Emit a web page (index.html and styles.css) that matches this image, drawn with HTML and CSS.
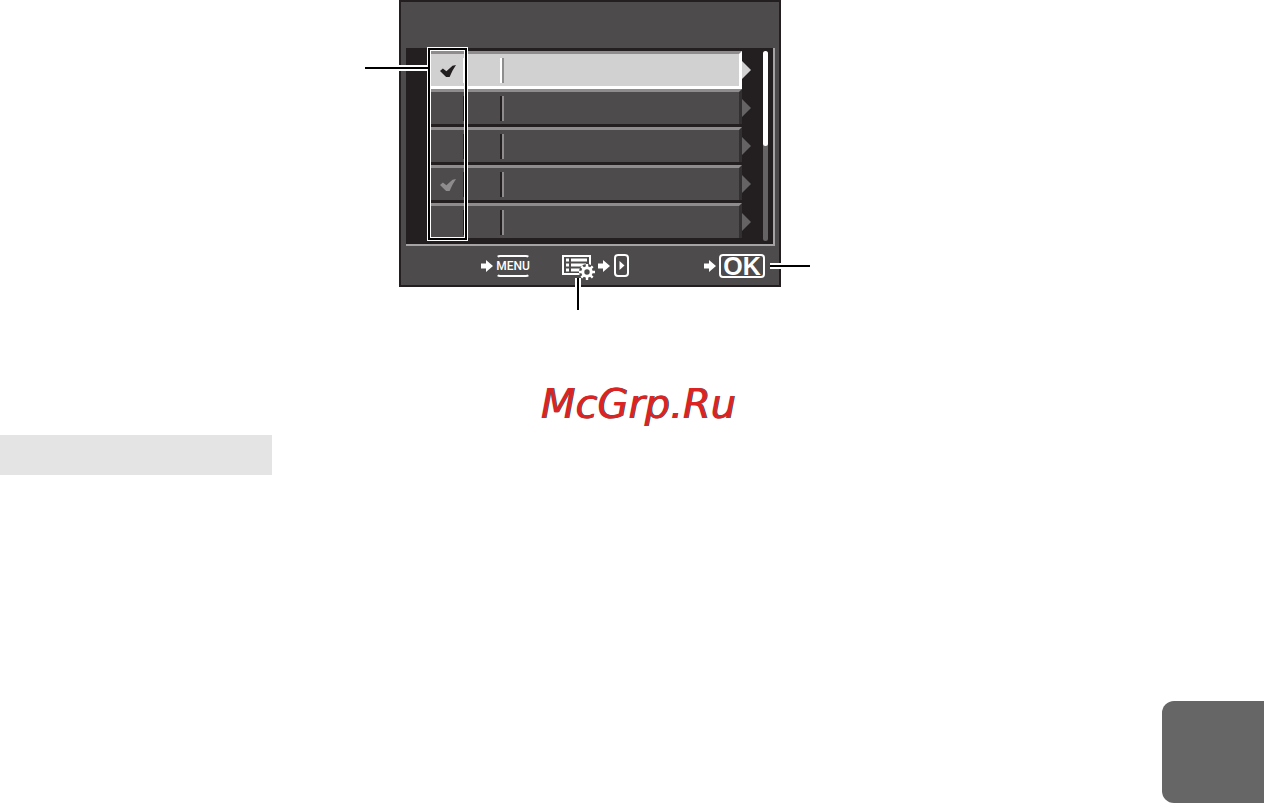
FILE: index.html
```html
<!DOCTYPE html>
<html lang="en">
<head>
    <meta charset="UTF-8">
    <meta name="viewport" content="width=device-width, initial-scale=1.0">
    <title>McGrp.Ru</title>
    <link rel="stylesheet" href="styles.css">
</head>
<body>

<!-- Shared icon shapes -->
<svg class="defs" aria-hidden="true">
    <symbol id="arrow" viewBox="0 0 12 12">
        <path d="M0 3.500h5V0l7 6-7 6V8.500H0z" fill="#fff"/>
    </symbol>
</svg>

<main class="page">
    <div class="diagram">
        <section class="camera">
            <div class="screen">
                <ul class="rows">
                    <li class="row selected">
                        <input type="checkbox" class="tick" aria-label="Item 1" checked>
                        <span class="divider"></span>
                        <button class="next" aria-label="Open item 1"></button>
                    </li>
                    <li class="row">
                        <input type="checkbox" class="tick" aria-label="Item 2">
                        <span class="divider"></span>
                        <button class="next" aria-label="Open item 2"></button>
                    </li>
                    <li class="row">
                        <input type="checkbox" class="tick" aria-label="Item 3">
                        <span class="divider"></span>
                        <button class="next" aria-label="Open item 3"></button>
                    </li>
                    <li class="row">
                        <input type="checkbox" class="tick" aria-label="Item 4" checked>
                        <span class="divider"></span>
                        <button class="next" aria-label="Open item 4"></button>
                    </li>
                    <li class="row">
                        <input type="checkbox" class="tick" aria-label="Item 5">
                        <span class="divider"></span>
                        <button class="next" aria-label="Open item 5"></button>
                    </li>
                </ul>
                <div class="scrollbar"><div class="thumb"></div></div>
            </div>

            <div class="controls">
                <div class="control">
                    <svg class="arrow"><use href="#arrow"/></svg>
                    <button class="menu-button">MENU</button>
                </div>
                <div class="control">
                    <svg class="list-icon" width="33" height="28" viewBox="0 0 33 28">
                        <path d="M1 2h27v18H1z" fill="none" stroke="#fff" stroke-width="2"/>
                        <path d="M4 6h3M4 11h3M4 16h3" stroke="#fff" stroke-width="3"/>
                        <path d="M9 6h16M9 11h15M9 16h10" stroke="#fff" stroke-width="3"/>
                        <circle cx="25" cy="18" r="8" fill="#4d4b4c"/>
                        <path d="M25 10v16M17 18h16M19.300 12.300l11.400 11.400M30.700 12.300L19.300 23.700" stroke="#fff" stroke-width="2.400"/>
                        <circle cx="25" cy="18" r="4.200" fill="#4d4b4c" stroke="#fff" stroke-width="3"/>
                    </svg>
                    <svg class="arrow"><use href="#arrow"/></svg>
                    <svg class="right-key" width="16" height="23" viewBox="0 0 16 23">
                        <rect x="1" y="1" width="13" height="21" rx="3" fill="none" stroke="#fff" stroke-width="2"/>
                        <path d="M5.500 7l5 4.500-5 4.500z" fill="#fff"/>
                    </svg>
                </div>
                <div class="control last">
                    <svg class="arrow"><use href="#arrow"/></svg>
                    <button class="ok-button">OK</button>
                </div>
            </div>
        </section>

        <!-- Callouts drawn over the camera screen -->
        <div class="tick-frame"></div>
        <svg class="callouts" width="445" height="310" viewBox="365 0 445 310">
            <path d="M399 68h29M770 266h11M578 278v9" stroke="#fff" stroke-width="6"/>
            <path d="M365 68h64M770 266h40M578 278v32" stroke="#000" stroke-width="2"/>
        </svg>
    </div>

    <p class="watermark">McGrp.Ru</p>
    <div class="heading-bar"></div>
    <div class="page-tab"></div>
</main>

</body>
</html>
```
FILE: styles.css
```css
* {
    box-sizing: border-box;
}

body {
    margin: 0;
    background: #fff;
    font-family: "Liberation Sans", Arial, sans-serif;
}

button {
    padding: 0;
    border: 0;
    background: none;
    color: #fff;
}

.defs {
    display: none;
}

.page {
    display: flex;
    flex-direction: column;
    min-height: 100vh;
}

.diagram {
    position: relative;
    width: 382px;
    margin-left: 399px;
}

.camera {
    padding: 46px 4px 0 5px;
    background: #4d4b4c;
    border: 2px solid #231f20;
}

.screen {
    display: flex;
    padding: 3px 5px 3px 24px;
    background: #231f20;
    border: solid #a5a3a4;
    border-width: 0 2px 2px 0;
}

/* Menu rows */
.rows {
    width: 312px;
    margin: 0;
    padding: 0;
    list-style: none;
}

.row {
    display: flex;
    align-items: center;
    height: 35px;
    margin-bottom: 3px;
    background: #4d4b4c;
    border: solid #333031;
    border-width: 3px 3px 0 1px;
    border-top-color: #8f8c8e;
    border-left-color: #8f8c8e;
}

.row.selected {
    height: 38px;
    margin-bottom: 0;
    background: #d1d1d1;
    border-color: #fff;
    border-top-color: #8f8c8e;
    border-left-color: #8f8c8e;
    border-bottom-width: 3px;
}

.tick {
    display: grid;
    place-items: center;
    width: 34px;
    height: 25px;
    margin: 0;
    appearance: none;
    border-right: 2px solid #231f20;
}

.tick:checked::before {
    content: "";
    width: 16px;
    height: 12px;
    margin: 2px 0 0 2px;
    background: #8f8c8e;
    clip-path: polygon(0 50%, 18% 30%, 40% 52%, 78% 6%, 100% 0, 78% 48%, 60% 100%, 38% 100%);
}

.selected .tick {
    border-color: #fff;
}

.selected .tick:checked::before {
    background: #231f20;
}

.divider {
    width: 4px;
    height: 25px;
    margin-left: 35px;
    border-left: 2px solid #231f20;
    background: #8f8c8e;
}

.selected .divider {
    border-color: #fff;
}

.next {
    width: 9px;
    height: 18px;
    margin: 0 -12px 0 auto;
    background: #656364;
    clip-path: polygon(0 0, 100% 50%, 0 100%);
}

.selected .next {
    background: #d1d1d1;
}

.scrollbar {
    width: 5px;
    margin-left: auto;
    background: #656364;
    border-radius: 3px;
}

.thumb {
    height: 50%;
    background: #fff;
    border-radius: 3px;
}

/* Key hints under the screen */
.controls {
    display: flex;
    gap: 32px;
    height: 39px;
    padding: 0 10px 0 75px;
}

.control {
    display: flex;
    align-items: center;
    gap: 3px;
}

.control.last {
    margin-left: auto;
}

.arrow {
    width: 12px;
    height: 12px;
}

.list-icon {
    margin-top: 4px;
}

.right-key {
    margin-left: 1px;
}

.menu-button {
    display: flex;
    justify-content: center;
    align-items: center;
    width: 34px;
    height: 22px;
    border: 2px solid #fff;
    border-radius: 4px;
    border-left-color: transparent;
    border-right-color: transparent;
    font: 500 12px/18px Roboto, Arial, sans-serif;
}

.ok-button {
    display: flex;
    justify-content: center;
    align-items: center;
    width: 46px;
    height: 24px;
    border: 2px solid #fff;
    border-radius: 4px;
    font: bold 25px/20px "Liberation Sans", Arial, sans-serif;
}

/* Callouts */
.tick-frame {
    position: absolute;
    top: 48px;
    left: 29px;
    width: 39px;
    height: 192px;
    border: 2px solid #000;
    box-shadow: 0 0 0 1px #fff, inset 0 0 0 1px #fff;
    pointer-events: none;
}

.callouts {
    position: absolute;
    top: 0;
    left: -34px;
    pointer-events: none;
}

.watermark {
    margin: 93px 0 0 12px;
    color: #dc2323;
    font: italic 40px/48px "DejaVu Sans", Verdana, sans-serif;
    text-align: center;
    text-shadow: 1px 0 0 #444;
}

.heading-bar {
    width: 272px;
    height: 40px;
    margin-top: 7px;
    background: #e4e4e4;
}

.page-tab {
    width: 102px;
    height: 102px;
    margin: auto 0 1px auto;
    background: #666;
    border-radius: 12px 0 0 12px;
}
```
